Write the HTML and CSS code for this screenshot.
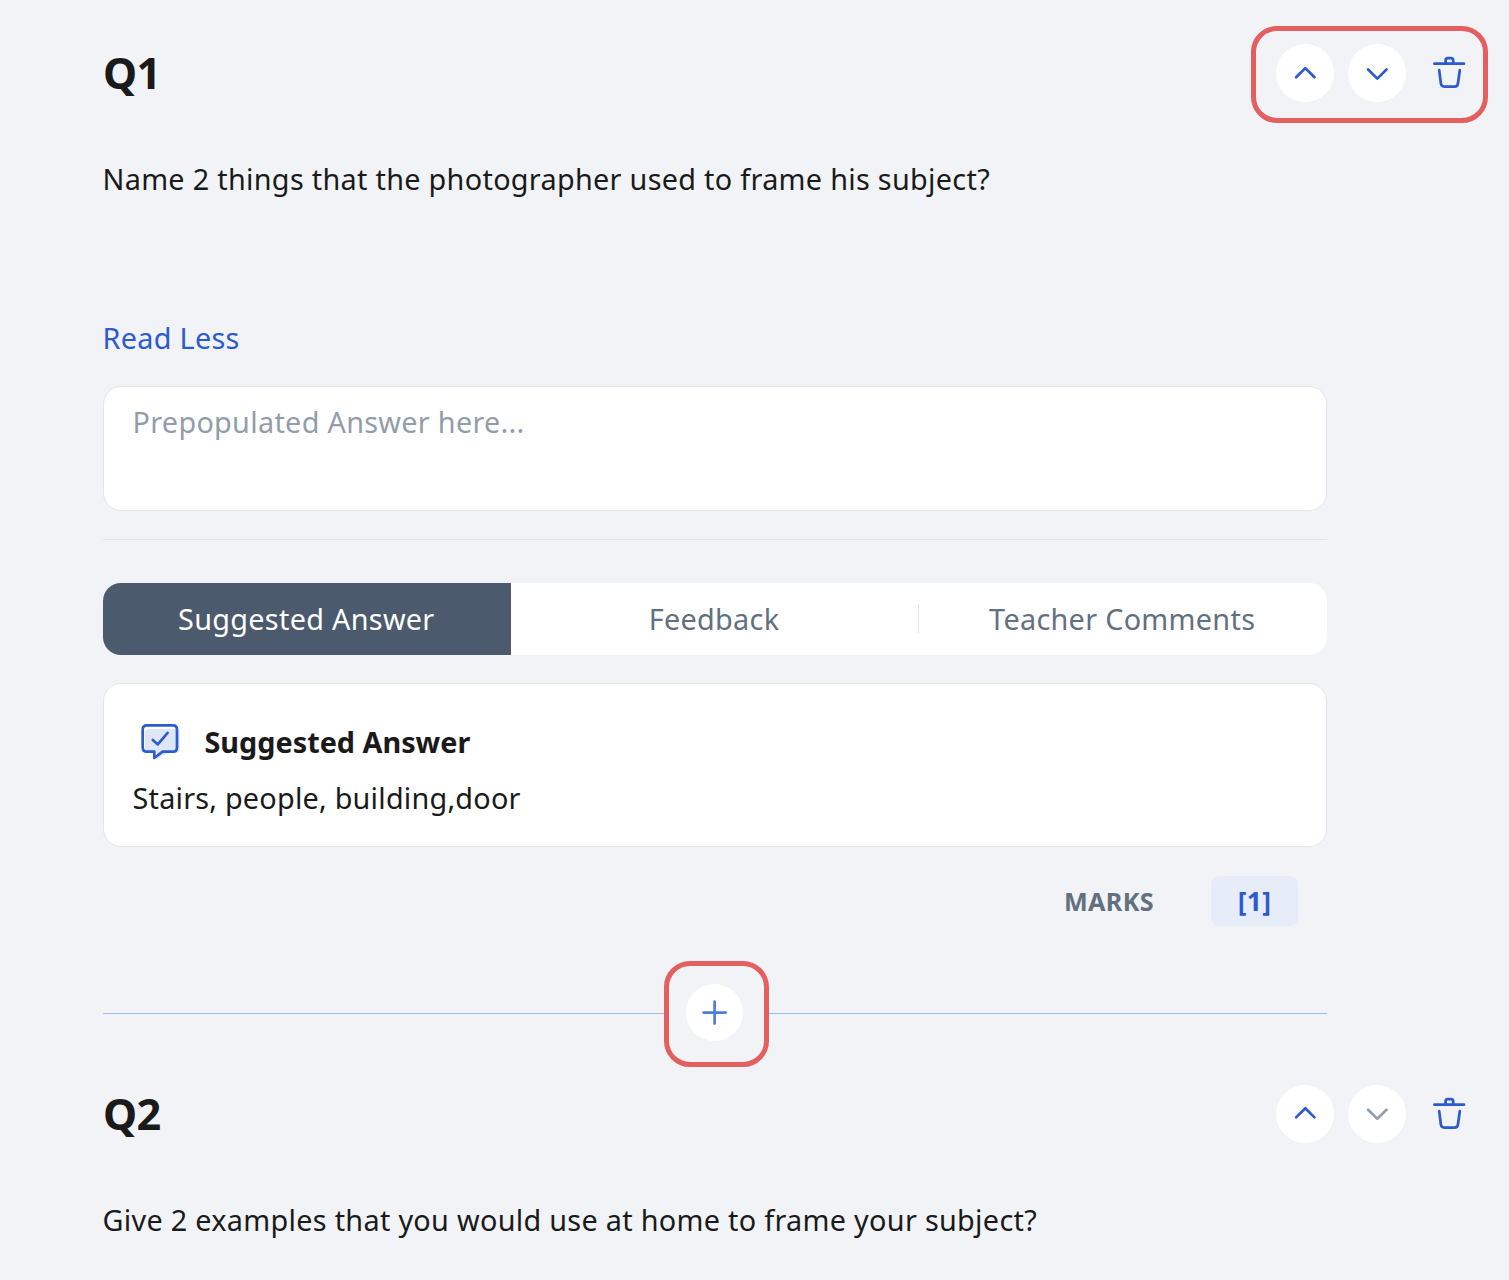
FILE: index.html
```html
<!DOCTYPE html>
<html lang="en">
<head>
<meta charset="utf-8">
<title>Questions</title>
<link rel="stylesheet" href="styles.css">
</head>
<body>
<main class="page">
  <section class="question">
    <header class="question-head">
      <h2 class="question-title">Q1</h2>
      <div class="actions">
        <button class="round-btn" aria-label="Move up"><svg width="58" height="58" viewBox="0 0 58 58"><path d="M20.1 33.2L29.3 24.1L38.5 33.2"/></svg></button>
        <button class="round-btn" aria-label="Move down"><svg width="58" height="58" viewBox="0 0 58 58"><path d="M20.1 25.5L29.3 34.6L38.5 25.5"/></svg></button>
        <button class="icon-btn" aria-label="Delete"><svg width="58" height="58" viewBox="0 0 58 58"><path d="M14.4 19.7H44M25.6 19V16.3Q25.6 14.1 27.8 14.1H31Q33.2 14.1 33.2 16.3V19M19.2 26.2L20.9 39.7Q21.3 42.6 24.2 42.6H34.6Q37.5 42.6 37.9 39.7L39.8 26.2"/></svg></button>
        <span class="highlight highlight-actions"></span>
      </div>
    </header>
    <p class="question-text">Name 2 things that the photographer used to frame his subject?</p>
    <a class="read-less">Read Less</a>
    <div class="answer-box">Prepopulated Answer here...</div>
    <hr class="rule">
    <div class="tabs">
      <button class="tab tab-active">Suggested Answer</button>
      <button class="tab">Feedback</button>
      <button class="tab">Teacher Comments</button>
    </div>
    <article class="suggested">
      <div class="suggested-head">
        <svg class="suggested-icon" width="42" height="38" viewBox="0 0 42 38">
          <path class="shade" d="M9 6H36Q39.5 6 39.5 10V26Q39.5 30 36 30H27L17 36V30H9Q5 30 5 26V10Q5 6 9 6Z"/>
          <path d="M7 2.4H32.8Q37 2.4 37 6.6V24.4Q37 28.6 32.8 28.6H22.6L14.3 35V28.6H7Q2.7 28.6 2.7 24.4V6.6Q2.7 2.4 7 2.4Z"/>
          <path d="M12.8 17L17.8 21.4L27.6 9.9"/>
        </svg>
        <h3 class="suggested-title">Suggested Answer</h3>
      </div>
      <p class="suggested-text">Stairs, people, building,door</p>
    </article>
    <div class="marks">
      <span class="marks-label">MARKS</span>
      <span class="marks-value">[1]</span>
    </div>
  </section>
  <div class="divider">
    <div class="add-wrap">
      <button class="add-btn" aria-label="Add question"><svg width="57" height="57" viewBox="0 0 57 57"><path d="M28.6 17.6V39.6M17.6 28.6H39.6"/></svg></button>
      <span class="highlight highlight-add"></span>
    </div>
  </div>
  <section class="question">
    <header class="question-head">
      <h2 class="question-title">Q2</h2>
      <div class="actions">
        <button class="round-btn" aria-label="Move up"><svg width="58" height="58" viewBox="0 0 58 58"><path d="M20.1 32.4L29.3 23.3L38.5 32.4"/></svg></button>
        <button class="round-btn round-btn-off" aria-label="Move down"><svg width="58" height="58" viewBox="0 0 58 58"><path d="M20.1 24.7L29.3 33.8L38.5 24.7"/></svg></button>
        <button class="icon-btn" aria-label="Delete"><svg width="58" height="58" viewBox="0 0 58 58"><path d="M14.4 19.7H44M25.6 19V16.3Q25.6 14.1 27.8 14.1H31Q33.2 14.1 33.2 16.3V19M19.2 26.2L20.9 39.7Q21.3 42.6 24.2 42.6H34.6Q37.5 42.6 37.9 39.7L39.8 26.2"/></svg></button>
      </div>
    </header>
    <p class="question-text">Give 2 examples that you would use at home to frame your subject?</p>
  </section>
</main>
</body>
</html>
```
FILE: styles.css
```css
* { box-sizing: border-box; margin: 0; padding: 0; }
body {
  background: #f1f3f7;
  color: #1a1a1a;
  font: 400 28.8px/44px "Noto Sans", sans-serif;
  letter-spacing: 0.3px;
  height: 1280px;
  overflow: hidden;
}
button { border: 0; background: none; font: inherit; letter-spacing: inherit; color: inherit; }
svg { display: block; fill: none; stroke: #2c5bd0; stroke-width: 2.7; stroke-linecap: round; stroke-linejoin: round; }
.page { width: 1224px; margin: 44px 0 0 103px; }
.question { display: flex; flex-direction: column; }
.question-head { display: flex; justify-content: space-between; align-items: center; width: 1375px; height: 58px; }
.question-title { font-size: 43.2px; font-weight: 700; line-height: 58px; letter-spacing: -0.7px; }
.actions { position: relative; display: flex; gap: 14px; }
.round-btn, .icon-btn { width: 58px; height: 58px; }
.round-btn { border-radius: 50%; background: #fff; }
.round-btn-off { height: 57.5px; }
.round-btn-off svg { stroke: #94a0ac; }
.highlight { position: absolute; border: 5px solid #e35f60; border-radius: 26px; pointer-events: none; }
.highlight-actions { left: -25px; top: -18px; width: 237px; height: 97px; }
.question-text, .read-less { margin-left: -0.5px; }
.question-text { margin-top: 55px; }
.read-less { margin-top: 115px; color: #2c5bd0; }
.answer-box { margin-top: 26px; height: 125px; padding: 13px 28.5px; border: 1px solid #e3e5ea; border-radius: 18px; background: #fff; color: #929daa; }
.rule { margin-top: 28px; border: 0; height: 1px; background: #e3e5ea; }
.tabs { display: flex; margin-top: 43px; height: 72px; border-radius: 18px; background: #fff; overflow: hidden; }
.tab { flex: 1; display: flex; align-items: center; justify-content: center; padding-right: 1px; color: #627080; }
.tab-active { background: #4c5a6d; color: #fff; }
.tab:last-child { padding-right: 2px; }
.tab:last-child::before { content: ""; width: 1px; height: 29px; margin: -1px auto 0 0; background: #e3e5ea; }
.tab:last-child::after { content: ""; margin-left: auto; }
.suggested { margin-top: 28px; height: 164px; padding: 36px 28.5px 0; border: 1px solid #e3e5ea; border-radius: 18px; background: #fff; }
.suggested-head { display: flex; align-items: center; height: 44px; padding-left: 7px; gap: 23px; }
.suggested-title { font-size: 28.8px; font-weight: 700; letter-spacing: 0; }
.suggested-icon .shade { fill: #dfe6f8; stroke: none; }
.suggested-text { margin-top: 12px; letter-spacing: 0.22px; }
.marks { display: flex; justify-content: flex-end; align-items: center; gap: 57px; margin-top: 29px; padding-right: 29px; height: 50px; font-size: 25.2px; font-weight: 700; letter-spacing: 0.35px; }
.marks-label { color: #627080; }
.marks-value { width: 87px; height: 50px; border-radius: 8px; background: #e6edf9; color: #2c5bd0; font-size: 26.4px; text-align: center; line-height: 50px; }
.divider { display: flex; align-items: center; margin: 58px 0 43px; height: 58px; }
.divider::before, .divider::after { content: ""; flex: 1; height: 1px; background: #9db8f2; }
.add-wrap { position: relative; width: 102px; height: 58px; display: flex; justify-content: center; }
.add-btn { width: 57px; height: 57px; margin-right: 1px; border-radius: 50%; background: #fff; }
.add-btn svg { stroke: #4f7bdd; }
.highlight-add { left: 0; top: -23px; width: 105px; height: 106px; }
```
